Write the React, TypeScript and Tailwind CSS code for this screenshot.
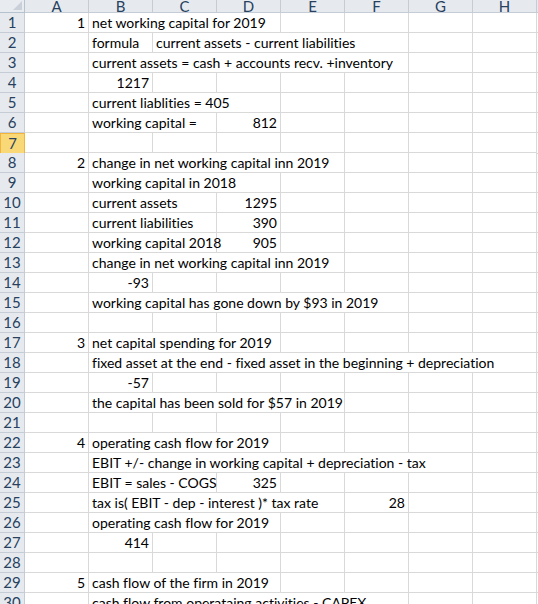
type Cell = { col: number; span?: number; text: string; right?: boolean }

const COLS = ['A', 'B', 'C', 'D', 'E', 'F', 'G', 'H']

const spanCls: Record<number, string> = {
  1: 'col-span-1',
  2: 'col-span-2',
  3: 'col-span-3',
  4: 'col-span-4',
  5: 'col-span-5',
  6: 'col-span-6',
  7: 'col-span-7',
  8: 'col-span-8',
}

// col index: 0 = A ... 7 = H
const rows: Cell[][] = [
  [{ col: 0, text: '1', right: true }, { col: 1, span: 3, text: 'net working capital for 2019' }],
  [{ col: 1, text: 'formula' }, { col: 2, span: 4, text: 'current assets - current liabilities' }],
  [{ col: 1, span: 5, text: 'current assets = cash + accounts recv. +inventory' }],
  [{ col: 1, text: '1217', right: true }],
  [{ col: 1, span: 3, text: 'current liablities = 405' }],
  [{ col: 1, span: 2, text: 'working capital =' }, { col: 3, text: '812', right: true }],
  [],
  [{ col: 0, text: '2', right: true }, { col: 1, span: 4, text: 'change in net working capital inn 2019' }],
  [{ col: 1, span: 3, text: 'working capital in 2018' }],
  [{ col: 1, span: 2, text: 'current assets' }, { col: 3, text: '1295', right: true }],
  [{ col: 1, span: 2, text: 'current liabilities' }, { col: 3, text: '390', right: true }],
  [{ col: 1, span: 2, text: 'working capital 2018' }, { col: 3, text: '905', right: true }],
  [{ col: 1, span: 4, text: 'change in net working capital inn 2019' }],
  [{ col: 1, text: '-93', right: true }],
  [{ col: 1, span: 5, text: 'working capital has gone down by $93 in 2019' }],
  [],
  [{ col: 0, text: '3', right: true }, { col: 1, span: 3, text: 'net capital spending for 2019' }],
  [{ col: 1, span: 7, text: 'fixed asset at the end - fixed asset in the beginning + depreciation' }],
  [{ col: 1, text: '-57', right: true }],
  [{ col: 1, span: 4, text: 'the capital has been sold for $57 in 2019' }],
  [],
  [{ col: 0, text: '4', right: true }, { col: 1, span: 3, text: 'operating cash flow for 2019' }],
  [{ col: 1, span: 6, text: 'EBIT +/- change in working capital + depreciation - tax' }],
  [{ col: 1, span: 2, text: 'EBIT = sales - COGS' }, { col: 3, text: '325', right: true }],
  [{ col: 1, span: 4, text: 'tax is( EBIT - dep - interest )* tax rate' }, { col: 5, text: '28', right: true }],
  [{ col: 1, span: 3, text: 'operating cash flow for 2019' }],
  [{ col: 1, text: '414', right: true }],
  [],
  [{ col: 0, text: '5', right: true }, { col: 1, span: 3, text: 'cash flow of the firm in 2019' }],
  [{ col: 1, span: 5, text: 'cash flow from operataing activities - CAPEX' }],
]

function fillRow(cells: Cell[]) {
  const out: Cell[] = []
  let c = 0
  const sorted = [...cells].sort((a, b) => a.col - b.col)
  for (const cell of sorted) {
    while (c < cell.col) out.push({ col: c++, text: '' })
    out.push(cell)
    c += cell.span ?? 1
  }
  while (c < 8) out.push({ col: c++, text: '' })
  return out
}

export default function App() {
  return (
    <div
      className="h-[604px] w-[538px] overflow-hidden bg-white text-[14px] leading-[19px] text-black [font-variant-ligatures:none]"
      style={{ fontFamily: 'Lato, "Open Sans", sans-serif' }}
    >
      {/* column headers */}
      <div className="grid h-[13px] grid-cols-[25px_repeat(8,64px)_1px] overflow-hidden">
        <div className="relative border-r border-b border-[#b7c2cf] bg-[#e8ecf1]">
          <div className="absolute right-[2px] bottom-[2px] h-0 w-0 border-b-[9px] border-l-[9px] border-b-[#c9d0d9] border-l-transparent" />
        </div>
        {COLS.map(l => (
          <div
            key={l}
            className="flex items-end justify-center overflow-hidden border-r border-b border-[#c5ccd6] bg-[#e6eaef] text-[15px] leading-[12px] text-[#27415e]"
          >
            {l}
          </div>
        ))}
        <div className="border-b border-[#c5ccd6] bg-[#e6eaef]" />
      </div>

      {rows.map((r, i) => {
        const selected = i === 6
        return (
          <div key={i} className="grid h-5 grid-cols-[25px_repeat(8,64px)_1px]">
            <div
              className={
                selected
                  ? 'flex items-center justify-center border border-[#f2b43c] bg-[#f9d877] text-[15px] text-[#27415e]'
                  : 'flex items-center justify-center border-r border-b border-[#c5ccd6] bg-[#e6eaef] text-[15px] text-[#27415e]'
              }
            >
              {i + 1}
            </div>
            {fillRow(r).map(cell => (
              <div
                key={cell.col}
                className={`${spanCls[cell.span ?? 1]} flex h-5 items-center whitespace-nowrap border-r border-b border-[#d9d9d9] px-[3px] ${cell.right ? 'justify-end' : 'justify-start'}`}
              >
                {cell.text}
              </div>
            ))}
            <div className="border-b border-[#d9d9d9]" />
          </div>
        )
      })}
    </div>
  )
}
